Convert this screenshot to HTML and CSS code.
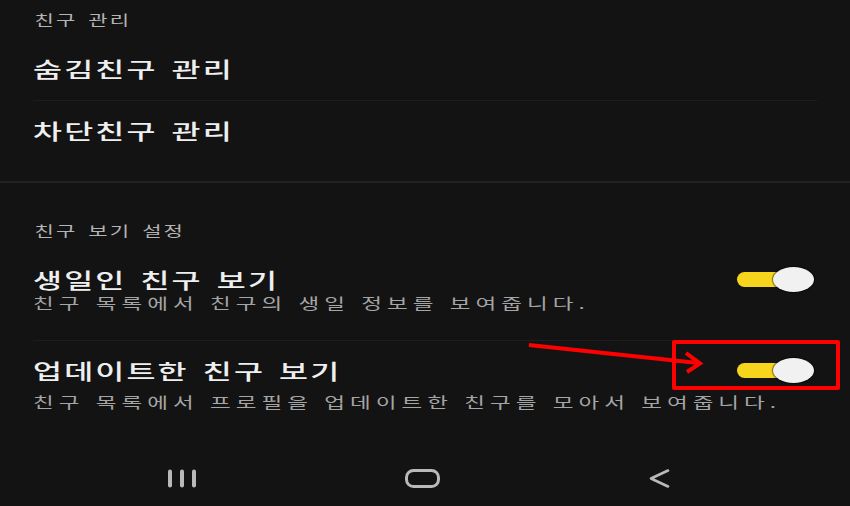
FILE: index.html
```html
<!DOCTYPE html>
<html lang="ko">
  <head>
    <meta charset="UTF-8" />
    <meta name="viewport" content="width=device-width, initial-scale=1.0" />
    <title>친구 설정</title>
    <link rel="stylesheet" href="styles.css">
  </head>
  <body>
    <main class="settings">
      <section class="group">
        <h3 class="group-title">친구 관리</h3>
        <div class="row"><span class="row-label">숨김친구 관리</span></div>
        <div class="row"><span class="row-label">차단친구 관리</span></div>
      </section>

      <section class="group group-view">
        <h3 class="group-title">친구 보기 설정</h3>
        <div class="row row-toggle">
          <div class="row-head">
            <span class="row-label">생일인 친구 보기</span>
            <span class="switch on"></span>
          </div>
          <p class="row-desc">친구 목록에서 친구의 생일 정보를 보여줍니다.</p>
        </div>
        <div class="row row-toggle">
          <div class="row-head">
            <span class="row-label">업데이트한 친구 보기</span>
            <span class="switch on"></span>
          </div>
          <p class="row-desc">친구 목록에서 프로필을 업데이트한 친구를 모아서 보여줍니다.</p>
        </div>
      </section>
    </main>

    <nav class="navbar">
      <svg class="nav-icon" width="30" height="19" viewBox="0 0 30 19">
        <rect x="1" y="0.5" width="4" height="18" rx="2" />
        <rect x="13" y="0.5" width="4" height="18" rx="2" />
        <rect x="25" y="0.5" width="4" height="18" rx="2" />
      </svg>
      <svg class="nav-icon" width="36" height="19" viewBox="0 0 36 19">
        <rect class="line" x="1.5" y="1.5" width="32" height="16" rx="7" />
      </svg>
      <svg class="nav-icon" width="21" height="19" viewBox="0 0 21 19">
        <polyline class="line" points="19,1.5 2,9.5 19,17.5" />
      </svg>
    </nav>

    <!-- 표시 (빨간 박스 + 화살표) -->
    <div class="mark-box"></div>
    <svg class="mark-arrow" width="190" height="40" viewBox="0 0 190 40">
      <line x1="9" y1="10" x2="178" y2="28" />
      <polyline points="166,18 180,28.5 167,37" />
    </svg>
  </body>
</html>
```

FILE: styles.css
```css
body {
  margin: 0;
  width: 850px;
  height: 506px;
  position: relative;
  display: flex;
  flex-direction: column;
  background: #131313;
  color: #efefef;
  font-family: "Noto Sans CJK KR", "Noto Sans", sans-serif;
  overflow: hidden;
}

.settings {
  flex: 1;
}

.group {
  padding: 9px 33px 19px;
}

.group-view {
  border-top: 2px solid #222;
  padding-top: 37px;
}

/* 화면 캡처가 가로로 늘어나 있어서 글자도 가로로 늘림 */
.group-title,
.row-label,
.row-desc {
  width: fit-content;
  transform: scaleX(1.5);
  transform-origin: left center;
}

.group-title {
  margin: 0 0 10px;
  padding-left: 1px;
  font-size: 14px;
  line-height: 20px;
  font-weight: 400;
  letter-spacing: 1.4px;
  word-spacing: 2px;
  color: #b4b4b4;
}

.row {
  padding: 15px 0 18px;
  font-size: 21px;
  line-height: 28px;
  color: #efefef;
}

.row:not(:last-child) {
  border-bottom: 1px solid #1e1e1e;
}

.row-label {
  display: inline-block;
  font-weight: 500;
  letter-spacing: 1.45px;
  word-spacing: 2px;
}

.row-toggle {
  padding-bottom: 27px;
}

.row-toggle:last-child {
  padding-bottom: 0;
}

.row-toggle + .row-toggle .row-desc {
  margin-top: 8px;
}

.row-head {
  display: flex;
  justify-content: space-between;
  align-items: center;
  height: 28px;
}

.row-desc {
  margin: 0;
  font-size: 15px;
  line-height: 20px;
  font-weight: 400;
  letter-spacing: 3.35px;
  color: #a5a5a5;
}

/* 토글 스위치 */
.switch {
  position: relative;
  flex-shrink: 0;
  width: 77px;
  height: 25px;
  margin-right: 3px;
}

.switch::before {
  content: "";
  position: absolute;
  left: 0;
  top: 5px;
  width: 62px;
  height: 15px;
  border-radius: 8px;
  background: #f6d51c;
}

.switch::after {
  content: "";
  position: absolute;
  right: 0;
  top: 0;
  width: 41px;
  height: 25px;
  border-radius: 50%;
  background: #f1f1f1;
  box-shadow: 0 0 1px 1px rgba(0, 0, 0, 0.5);
}

/* 하단 내비게이션 바 */
.navbar {
  height: 56px;
  display: flex;
  justify-content: center;
  align-items: center;
  gap: 208px;
  padding-right: 14px;
}

.nav-icon {
  display: block;
  fill: #b9b9b9;
}

.nav-icon .line {
  fill: none;
  stroke: #b9b9b9;
  stroke-width: 3;
  stroke-linejoin: round;
  stroke-linecap: round;
}

.nav-icon polyline.line {
  stroke-width: 2.6;
}

/* 주석 표시 */
.mark-box {
  position: absolute;
  left: 672px;
  top: 340px;
  width: 160px;
  height: 42px;
  border: 4px solid #ff0000;
  border-radius: 2px;
}

.mark-arrow {
  position: absolute;
  left: 520px;
  top: 335px;
  fill: none;
  stroke: #ff0000;
  stroke-width: 4;
}
```
